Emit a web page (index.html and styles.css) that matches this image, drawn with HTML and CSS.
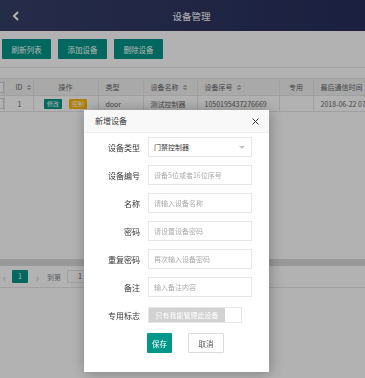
FILE: index.html
```html
<!DOCTYPE html>
<html lang="zh-CN">
<head>
    <meta charset="UTF-8">
    <meta name="viewport" content="width=device-width, initial-scale=1.0">
    <title>设备管理</title>
    <link rel="stylesheet" href="styles.css">
</head>
<body>
    <div class="page">
        <header class="topbar">
            <a class="back" href="#">
                <svg width="8" height="10" viewBox="0 0 8 10"><path d="M6 1 L2 5 L6 9" fill="none" stroke="#fff" stroke-width="2"/></svg>
            </a>
            <h1>设备管理</h1>
        </header>

        <div class="toolbar">
            <button class="btn">刷新列表</button>
            <button class="btn">添加设备</button>
            <button class="btn">删除设备</button>
        </div>

        <div class="table-view">
            <div class="table-main">
                <table class="grid">
                    <colgroup>
                        <col style="width:4px"><col style="width:29px"><col style="width:65px"><col style="width:45px">
                        <col style="width:54px"><col style="width:82px"><col style="width:34px"><col style="width:90px">
                    </colgroup>
                    <thead>
                        <tr>
                            <th class="cb-cell"><span class="cb"></span></th>
                            <th>ID <i class="sort"></i></th>
                            <th class="center">操作</th>
                            <th>类型</th>
                            <th>设备名称 <i class="sort"></i></th>
                            <th>设备序号 <i class="sort"></i></th>
                            <th class="center">专用</th>
                            <th>最后通信时间</th>
                        </tr>
                    </thead>
                    <tbody>
                        <tr>
                            <td class="cb-cell"><span class="cb"></span></td>
                            <td class="id">1</td>
                            <td class="center"><span class="tag tag-edit">修改</span><span class="tag tag-ctrl">控制</span></td>
                            <td>door</td>
                            <td>测试控制器</td>
                            <td>1050195437276669</td>
                            <td></td>
                            <td>2018-06-22 07:41:12</td>
                        </tr>
                    </tbody>
                </table>
            </div>
            <div class="scrollbar"></div>
            <div class="pager">
                <span class="pg-arrow">&lsaquo;</span>
                <span class="pg-cur">1</span>
                <span class="pg-arrow">&rsaquo;</span>
                <span class="pg-skip">到第</span>
                <span class="pg-input">1</span>
            </div>
        </div>
    </div>

    <div class="shade"></div>

    <div class="layer">
        <div class="layer-title">
            新增设备
            <svg class="close" width="7" height="7" viewBox="0 0 7 7"><path d="M0.5 0.5 L6.5 6.5 M6.5 0.5 L0.5 6.5" stroke="#333" stroke-width="1"/></svg>
        </div>
        <form class="layer-body">
            <div class="form-item">
                <label>设备类型</label>
                <div class="select">门禁控制器<i class="caret"></i></div>
            </div>
            <div class="form-item">
                <label>设备编号</label>
                <input type="text" placeholder="设备5位或者16位序号">
            </div>
            <div class="form-item">
                <label>名称</label>
                <input type="text" placeholder="请输入设备名称">
            </div>
            <div class="form-item">
                <label>密码</label>
                <input type="text" placeholder="请设置设备密码">
            </div>
            <div class="form-item">
                <label>重复密码</label>
                <input type="text" placeholder="再次输入设备密码">
            </div>
            <div class="form-item">
                <label>备注</label>
                <input type="text" placeholder="输入备注内容">
            </div>
            <div class="form-item">
                <label>专用标志</label>
                <div class="switch"><span class="switch-text">只有我能管理此设备</span><span class="switch-knob"></span></div>
            </div>
            <div class="form-actions">
                <button type="button" class="btn-save">保存</button>
                <button type="button" class="btn-cancel">取消</button>
            </div>
        </form>
    </div>
</body>
</html>
```

FILE: styles.css
```css
body { margin: 0; padding: 0; font-family: "Noto Sans CJK SC", "Noto Sans", sans-serif; font-size: 7.5px; color: #666; background-color: #fff; }

.page { height: 378px; overflow: hidden; }

.topbar { height: 31px; background: linear-gradient(to right, #363f68, #272e5c); display: flex; align-items: center; position: relative; }
.topbar .back { display: flex; margin-left: 12px; }
.topbar h1 { margin: 0; flex: 1; text-align: center; padding-right: 2px; font-size: 9.5px; font-weight: normal; color: #fff; }

.toolbar { display: flex; gap: 7px; padding: 8px 0 8px 2px; border-bottom: 1px solid #ededed; }
.btn { height: 20px; width: 49px; padding: 0; border: none; border-radius: 1px; background-color: #009688; color: #fff; font-family: inherit; font-size: 7.5px; }

.table-view { margin-top: 10px; }
.table-main { height: 181px; overflow: hidden; }
.grid { border-collapse: collapse; table-layout: fixed; width: 403px; font-size: 7px; color: #666; }
.grid th, .grid td { border: 1px solid #e6e6e6; padding: 0 0 0 7px; text-align: left; white-space: nowrap; overflow: hidden; font-weight: normal; }
.grid th { height: 16px; background-color: #f2f2f2; }
.grid td { height: 15px; }
.grid th:first-child, .grid td:first-child { border-left: none; padding: 0; }
.grid .center { text-align: center; padding: 0; }
.grid .id { padding-left: 13px; }
.grid th:nth-child(2) { padding-left: 11px; }
.cb { display: block; width: 9px; height: 9px; margin-left: -7px; border: 1px solid #d2d2d2; background: #fff; }
.sort { display: inline-block; width: 4px; height: 7px; margin-left: 3px; vertical-align: -1px; background:
    linear-gradient(to bottom right, transparent 50%, #b2b2b2 50%) 0 0 / 2px 3px no-repeat,
    linear-gradient(to bottom left, transparent 50%, #b2b2b2 50%) 2px 0 / 2px 3px no-repeat,
    linear-gradient(to top right, transparent 50%, #b2b2b2 50%) 0 4px / 2px 3px no-repeat,
    linear-gradient(to top left, transparent 50%, #b2b2b2 50%) 2px 4px / 2px 3px no-repeat; }
.tag { display: inline-block; width: 18px; height: 10px; line-height: 10px; font-size: 6px; color: #fff; border-radius: 1px; vertical-align: middle; }
.tag-edit { background-color: #009688; margin-right: 7px; }
.tag-ctrl { background-color: #ffb800; }

.scrollbar { height: 7px; background-color: #dcdcdc; }
.pager { display: flex; align-items: center; height: 13px; padding: 4px 0 4px 0; border-bottom: 1px solid #e6e6e6; font-size: 7px; color: #666; }
.pg-arrow { width: 9px; text-align: center; color: #c2c2c2; font-size: 11px; }
.pg-arrow:first-child { margin-left: 0; margin-right: 3px; }
.pg-cur { width: 16px; height: 13px; line-height: 13px; text-align: center; background-color: #009688; color: #fff; border-radius: 1px; margin-right: 5px; }
.pg-skip { margin-left: 5px; color: #888; }
.pg-input { width: 28px; height: 11px; line-height: 11px; margin-left: 6px; padding-left: 10px; border: 1px solid #e6e6e6; box-sizing: content-box; }

.shade { position: fixed; inset: 0; background-color: rgba(0, 0, 0, 0.3); }

.layer { position: fixed; left: 84px; top: 110px; width: 185px; height: 262px; background-color: #fff; box-shadow: 1px 1px 14px rgba(0, 0, 0, 0.3); }
.layer-title { height: 22px; line-height: 22px; padding-left: 11px; background-color: #f8f8f8; border-bottom: 1px solid #eee; font-size: 8px; color: #333; position: relative; }
.layer-title .close { position: absolute; right: 10px; top: 8px; }

.layer-body { margin: 0; padding: 4px 17px 0 0; }
.form-item { display: flex; align-items: center; height: 20px; margin-bottom: 8px; }
.form-item label { width: 56px; text-align: right; margin-right: 8px; font-size: 8px; color: #333; }
.form-item input, .select { box-sizing: border-box; width: 104px; height: 20px; border: 1px solid #e6e6e6; padding: 0 0 0 5px; font-family: inherit; font-size: 7px; color: #333; background: #fff; }
.form-item input::placeholder { color: #aaa; }
.select { display: flex; align-items: center; position: relative; }
.caret { position: absolute; right: 6px; top: 8px; width: 0; height: 0; border-left: 3px solid transparent; border-right: 3px solid transparent; border-top: 3px solid #c2c2c2; }

.switch { display: flex; width: 94px; height: 16px; box-sizing: border-box; border: 1px solid #e6e6e6; }
.switch-text { width: 76px; background-color: #d2d2d2; color: #fff; font-size: 7px; line-height: 14px; text-align: center; }
.switch-knob { flex: 1; background: #fff; }

.form-actions { display: flex; gap: 16px; padding-left: 63px; margin-top: 0; }
.form-actions button { height: 20px; padding: 0; font-family: inherit; font-size: 7.5px; border-radius: 1px; }
.btn-save { width: 25px; border: none; background-color: #009688; color: #fff; }
.btn-cancel { width: 36px; border: 1px solid #dcdcdc; background-color: #fff; color: #555; }
```
